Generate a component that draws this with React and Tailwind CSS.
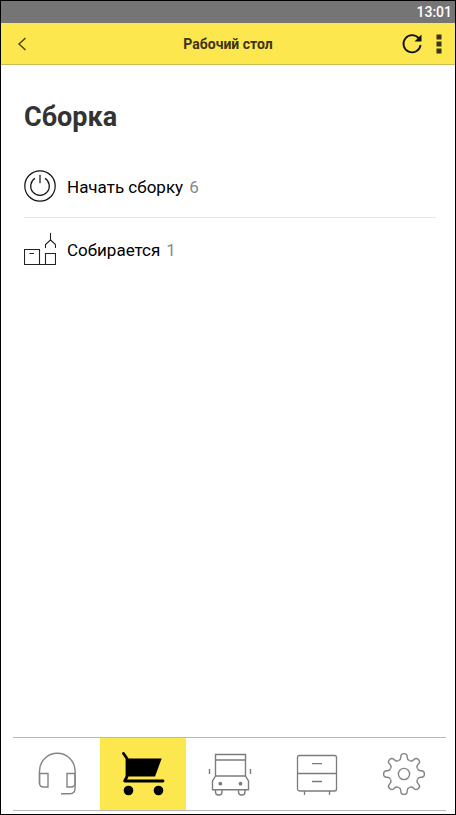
// src/App.jsx
import React, { useState } from 'react';

const PowerIcon = () => (
  <svg className="size-8" viewBox="0 0 32 32" fill="none" stroke="#111" strokeWidth="1.2" aria-hidden="true">
    <circle cx="16" cy="16" r="15.2" />
    <path d="M11 8.3A9.3 9.3 0 1 0 21 8.3M16 4.8V13.3" />
  </svg>
);

const AssemblyIcon = () => (
  <svg className="size-8" viewBox="0 0 32 32" fill="none" stroke="#222" strokeWidth="1.1" aria-hidden="true">
    <path d="M0.5 16.5H15.5V31.5H0.5ZM5.5 20.5H10M21.5 20.5H31.5V31.5H21.5ZM15.5 31.5H21.5" />
    <path d="M26.5 0V7L21.5 11.5V15M26.5 7L31.5 11.5V15" />
  </svg>
);

const HeadsetIcon = () => (
  <svg className="size-11" viewBox="0 0 44 44" fill="none" stroke="#858585" strokeWidth="1.4" aria-hidden="true">
    <path d="M4.5 32V19A17.8 17.8 0 0 1 40.1 19V36C40.1 40 38.5 41.7 35 41.7H26" />
    <path d="M4.5 21.5H13V35H8.5Q4.5 35 4.5 31ZM40 21.5H32V35H36Q40 35 40 31Z" />
  </svg>
);

const CartIcon = () => (
  <svg className="size-11" viewBox="0 0 44 44" aria-hidden="true">
    <path d="M4.5 6.5H39.7L33 24.5H4.5Z" />
    <path d="M1.5 1.5L5 6.5V24.5L2.7 29H41" fill="none" stroke="#000" strokeWidth="2.8" strokeLinecap="round" strokeLinejoin="round" />
    <circle cx="6.5" cy="38.5" r="4.8" />
    <circle cx="36.5" cy="38.5" r="4.8" />
  </svg>
);

const TruckIcon = () => (
  <svg className="size-11" viewBox="0 0 44 44" fill="none" stroke="#7c7c7c" strokeWidth="1.4" aria-hidden="true">
    <path d="M7.5 2.5H37.5V24H7.5ZM7.5 8H37.5M7.5 24L4.5 29V37.8H40.5V29L37.5 24M1.5 17V22M42.5 17V22" />
    <path d="M7.5 38V40Q7.5 43 10.5 43H11Q14 43 14 40V38M30.5 38V40Q30.5 43 33.5 43H34Q37 43 37 40V38" />
    <circle cx="12.3" cy="31.7" r="1.9" fill="#7c7c7c" stroke="none" />
    <circle cx="32.5" cy="31.7" r="1.9" fill="#7c7c7c" stroke="none" />
  </svg>
);

const CabinetIcon = () => (
  <svg className="size-11" viewBox="0 0 44 44" fill="none" stroke="#7c7c7c" strokeWidth="1.3" aria-hidden="true">
    <rect x="2.5" y="3.5" width="39" height="35.5" rx="2" />
    <path d="M2.5 21.5H41.5M17 11.7H27M17 29.5H27M9.5 39V43M34.5 39V43" />
  </svg>
);

const toothAngles = [0, 45, 90, 135, 180, 225, 270, 315];

const GearIcon = () => (
  <svg className="size-11" viewBox="-22 -22 44 44" fill="none" stroke="#858585" strokeWidth="1.4" aria-hidden="true">
    {toothAngles.map((angle) => (
      <path
        key={angle}
        transform={`rotate(${angle})`}
        d="M-5.5 -13.4C-3.8 -14 -3.2 -14.8 -3.2 -16.5V-17.2A3.2 3.2 0 0 1 3.2 -17.2V-16.5C3.2 -14.8 3.8 -14 5.5 -13.4"
      />
    ))}
    <circle r="5.6" />
  </svg>
);

const tasks = [
  { id: 'start', title: 'Начать сборку', count: 6, icon: PowerIcon },
  { id: 'progress', title: 'Собирается', count: 1, icon: AssemblyIcon },
];

const tabs = [
  { id: 'support', icon: HeadsetIcon },
  { id: 'assembly', icon: CartIcon },
  { id: 'delivery', icon: TruckIcon },
  { id: 'storage', icon: CabinetIcon },
  { id: 'settings', icon: GearIcon },
];

const App = () => {
  const [activeTab, setActiveTab] = useState('assembly');

  return (
    <div className="flex min-h-screen flex-col border border-black bg-white font-[Roboto,sans-serif]">
      {/* Status bar */}
      <div className="flex h-[22px] items-center justify-end bg-[#757575] pr-[3px] text-sm font-medium text-white">
        13:01
      </div>

      {/* Header */}
      <header className="grid h-[42px] grid-cols-[64px_1fr_64px] items-center border-b border-[#c9bb55] bg-[#fce74f]">
        <button type="button" className="flex h-full items-center pl-4">
          <svg className="h-4 w-3" viewBox="0 0 12 16" fill="none" stroke="#4a4010" strokeWidth="1.4" aria-hidden="true">
            <path d="M8.5 2L2 8L8.5 14" />
          </svg>
        </button>
        <h1 className="pt-px text-center text-sm font-bold text-[#3d3413]">Рабочий стол</h1>
        <div className="flex h-full items-center justify-end gap-3 pr-[13px]">
          <button type="button">
            <svg className="size-6" viewBox="0 0 24 24" aria-hidden="true">
              <path d="M18.9 6.5A8.6 8.6 0 1 0 20.6 13" fill="none" stroke="#111" strokeWidth="1.8" />
              <path d="M21.5 2.5V9.5H14.5Z" fill="#111" />
            </svg>
          </button>
          <button type="button">
            <svg className="h-5 w-[6px]" viewBox="0 0 6 20" fill="#3a3316" aria-hidden="true">
              <path d="M0.5 0.5H5.5V5.5H0.5ZM0.5 7.5H5.5V12.5H0.5ZM0.5 14.5H5.5V19.5H0.5Z" />
            </svg>
          </button>
        </div>
      </header>

      {/* Tasks */}
      <main className="flex-1 pl-[23px] pr-[19px] pt-[34px]">
        <h2 className="text-[27px] font-bold leading-9 text-[#333]">Сборка</h2>
        <ul className="mt-5 divide-y divide-[#e6e6e6]">
          {tasks.map(({ id, title, count, icon: Icon }) => (
            <li key={id}>
              <button type="button" className="flex h-[62px] w-full items-center gap-[11px] text-left text-black">
                <Icon />
                <span className="flex gap-[6px] pt-0.5 text-[17px] leading-6">
                  <span>{title}</span>
                  <span className="text-[#888]">{count}</span>
                </span>
              </button>
            </li>
          ))}
        </ul>
      </main>

      {/* Tab bar */}
      <nav className="mb-[3px] ml-3 mr-[9px] flex h-[74px] border-y border-[#b9b9b9]">
        {tabs.map(({ id, icon: Icon }) => (
          <button
            key={id}
            type="button"
            onClick={() => setActiveTab(id)}
            className={`flex flex-1 items-center justify-center pl-0.5 ${activeTab === id ? 'bg-[#fce74f]' : ''}`}
          >
            <Icon />
          </button>
        ))}
      </nav>
    </div>
  );
};

export default App;
